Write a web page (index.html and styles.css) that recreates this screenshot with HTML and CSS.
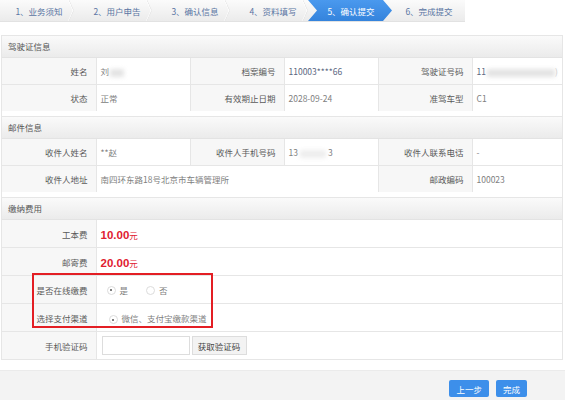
FILE: index.html
```html
<!DOCTYPE html>
<html>
<head>
<meta charset="utf-8">
<link rel="stylesheet" href="styles.css">
</head>
<body>
<div class="steps">
  <div class="step">1、业务须知</div>
  <div class="step">2、用户申告</div>
  <div class="step">3、确认信息</div>
  <div class="step">4、资料填写</div>
  <div class="step active">5、确认提交</div>
  <div class="step last">6、完成提交</div>
</div>

<div class="panel">
  <div class="sec-head">驾驶证信息</div>
  <table class="grid">
    <colgroup><col class="c"><col class="c"><col class="c"><col class="c"><col class="c"><col></colgroup>
    <tr>
      <td class="lbl">姓名</td><td class="val">刘<span class="blur b1"></span></td>
      <td class="lbl">档案编号</td><td class="val dark">110003****66</td>
      <td class="lbl">驾驶证号码</td><td class="val dark">11<span class="blur b2"></span><span class="faint">)</span></td>
    </tr>
    <tr>
      <td class="lbl">状态</td><td class="val">正常</td>
      <td class="lbl">有效期止日期</td><td class="val">2028-09-24</td>
      <td class="lbl">准驾车型</td><td class="val">C1</td>
    </tr>
  </table>

  <div class="sec-head gap">邮件信息</div>
  <table class="grid">
    <colgroup><col class="c"><col class="c"><col class="c"><col class="c"><col class="c"><col></colgroup>
    <tr>
      <td class="lbl">收件人姓名</td><td class="val">**赵</td>
      <td class="lbl">收件人手机号码</td><td class="val">13<span class="blur b3"></span>3</td>
      <td class="lbl">收件人联系电话</td><td class="val">-</td>
    </tr>
    <tr>
      <td class="lbl">收件人地址</td><td class="val" colspan="3">南四环东路18号北京市车辆管理所</td>
      <td class="lbl">邮政编码</td><td class="val">100023</td>
    </tr>
  </table>

  <div class="sec-head gap">缴纳费用</div>
  <table class="grid fee">
    <colgroup><col class="c"><col></colgroup>
    <tr><td class="lbl">工本费</td><td class="val"><span class="money">10.00</span><span class="yuan">元</span></td></tr>
    <tr><td class="lbl">邮寄费</td><td class="val"><span class="money">20.00</span><span class="yuan">元</span></td></tr>
    <tr><td class="lbl">是否在线缴费</td><td class="val">
      <span class="radio on"></span><span class="opt">是</span>
      <span class="radio"></span><span class="opt">否</span>
    </td></tr>
    <tr><td class="lbl">选择支付渠道</td><td class="val pay">
      <span class="radio on"></span><span class="opt">微信、支付宝缴款渠道</span>
    </td></tr>
    <tr><td class="lbl">手机验证码</td><td class="val">
      <span class="code-row"><span class="input"></span><span class="btn-code">获取验证码</span></span>
    </td></tr>
  </table>
</div>

<div class="footer">
  <span class="btn">上一步</span>
  <span class="btn">完成</span>
</div>

<div class="redbox"></div>
</body>
</html>
```

FILE: styles.css
```css
html, body {
  margin: 0;
  padding: 0;
  background: #fff;
  font-family: "Noto Sans CJK SC", "Liberation Sans", sans-serif;
  font-size: 8.5px;
  color: #666;
  width: 565px;
  height: 400px;
  overflow: hidden;
  position: relative;
}

.steps {
  display: flex;
  width: 465px;
  height: 22px;
  background: linear-gradient(#fbfbfb, #ebebeb);
  border-bottom: 1px solid #e2e2e2;
  box-sizing: border-box;
}
.step {
  width: 78px;
  flex: none;
  display: flex;
  align-items: center;
  justify-content: center;
  color: #5a75a3;
  position: relative;
}
.step::after {
  content: "";
  position: absolute;
  right: 2px;
  top: 3px;
  width: 14px;
  height: 14px;
  border-right: 1px solid #fff;
  border-top: 1px solid #fff;
  transform: scaleX(0.45) rotate(45deg);
  box-shadow: 1px -1px 0 #e2e2e2;
}
.step.active::after, .step.last::after { display: none; }
.step.active {
  width: 84px;
  margin-left: -4px;
  margin-right: -2px;
  color: #fff;
  background: linear-gradient(#4a99ee, #3483dc);
  clip-path: polygon(0 0, calc(100% - 9px) 0, 100% 50%, calc(100% - 9px) 100%, 0 100%, 9px 50%);
  padding-left: 2px;
  box-sizing: border-box;
}

.panel {
  margin: 13px 2px 0 1px;
  border: 1px solid #e6e6e6;
  border-bottom: none;
}
.sec-head {
  height: 21px;
  line-height: 21px;
  padding-left: 6px;
  background: linear-gradient(#fafafa, #ebebeb);
  color: #555;
  border-bottom: 1px solid #e3e3e3;
}
.sec-head.gap {
  margin-top: 5px;
  border-top: 1px solid #e6e6e6;
}

.grid {
  width: 100%;
  border-collapse: collapse;
  table-layout: fixed;
}
.grid col.c { width: 94px; }
.grid td {
  height: 26px;
  padding: 0;
  border-bottom: 1px solid #e6e6e6;
  border-right: 1px solid #e6e6e6;
  white-space: nowrap;
  overflow: hidden;
}
.grid td:last-child { border-right: none; }
.grid tr:last-child td { border-bottom: none; }
.grid.fee td { height: 27px; }
.grid.fee tr:last-child td { border-bottom: 1px solid #e6e6e6; }

.lbl {
  background: #f7f7f7;
  text-align: right;
  padding-right: 8px !important;
  color: #5a5a5a;
}
.val {
  padding-left: 4px !important;
  color: #808080;
}
.val.dark { color: #5a6680; }

.blur {
  display: inline-block;
  height: 8px;
  vertical-align: middle;
  background: #d8d8d8;
  filter: blur(2px);
  opacity: 0.7;
}
.b1 { width: 14px; margin-left: 1px; }
.b2 { width: 68px; margin-left: 1px; }
.b3 { width: 26px; margin: 0 2px; background: #e6e6e6; }
.faint { color: #ccc; }

.money {
  color: #e02030;
  font-family: "Liberation Sans", sans-serif;
  font-weight: bold;
  font-size: 11.5px;
  vertical-align: middle;
}
.yuan {
  color: #e02030;
  vertical-align: middle;
  font-size: 8.5px;
}

.radio {
  display: inline-block;
  width: 9px;
  height: 9px;
  border: 1px solid #dcdcdc;
  border-radius: 50%;
  box-sizing: border-box;
  vertical-align: middle;
  position: relative;
  margin-left: 6px;
}
.radio.on::after {
  content: "";
  position: absolute;
  left: 2.5px;
  top: 2.5px;
  width: 2px;
  height: 2px;
  border-radius: 50%;
  background: #555;
}
.opt {
  vertical-align: middle;
  margin-left: 4px;
  margin-right: 10px;
  color: #808080;
}
.pay .radio { margin-left: 8px; margin-top: 3px; }

.code-row {
  display: inline-flex;
  align-items: center;
  gap: 2px;
  vertical-align: middle;
  margin-left: 1px;
}
.input {
  width: 88px;
  height: 19px;
  border: 1px solid #ddd;
  box-sizing: border-box;
  background: #fff;
}
.btn-code {
  width: 55px;
  height: 19px;
  box-sizing: border-box;
  border: 1px solid #ddd;
  background: #f3f3f3;
  color: #444;
  display: flex;
  align-items: center;
  justify-content: center;
}

.footer {
  position: absolute;
  left: 0;
  right: 0;
  top: 370px;
  bottom: 0;
  background: #f3f3f3;
  border-top: 1px solid #ebebeb;
  display: flex;
  justify-content: flex-end;
  align-items: flex-start;
  padding: 9px 38px 0 0;
  gap: 7px;
}
.btn {
  height: 17px;
  padding: 0 7px;
  background: #3d8fea;
  color: #fff;
  border-radius: 2px;
  display: flex;
  align-items: center;
}

.redbox {
  position: absolute;
  left: 32px;
  top: 273px;
  width: 181px;
  height: 55px;
  border: 2px solid #e31e24;
  box-sizing: border-box;
}
```
